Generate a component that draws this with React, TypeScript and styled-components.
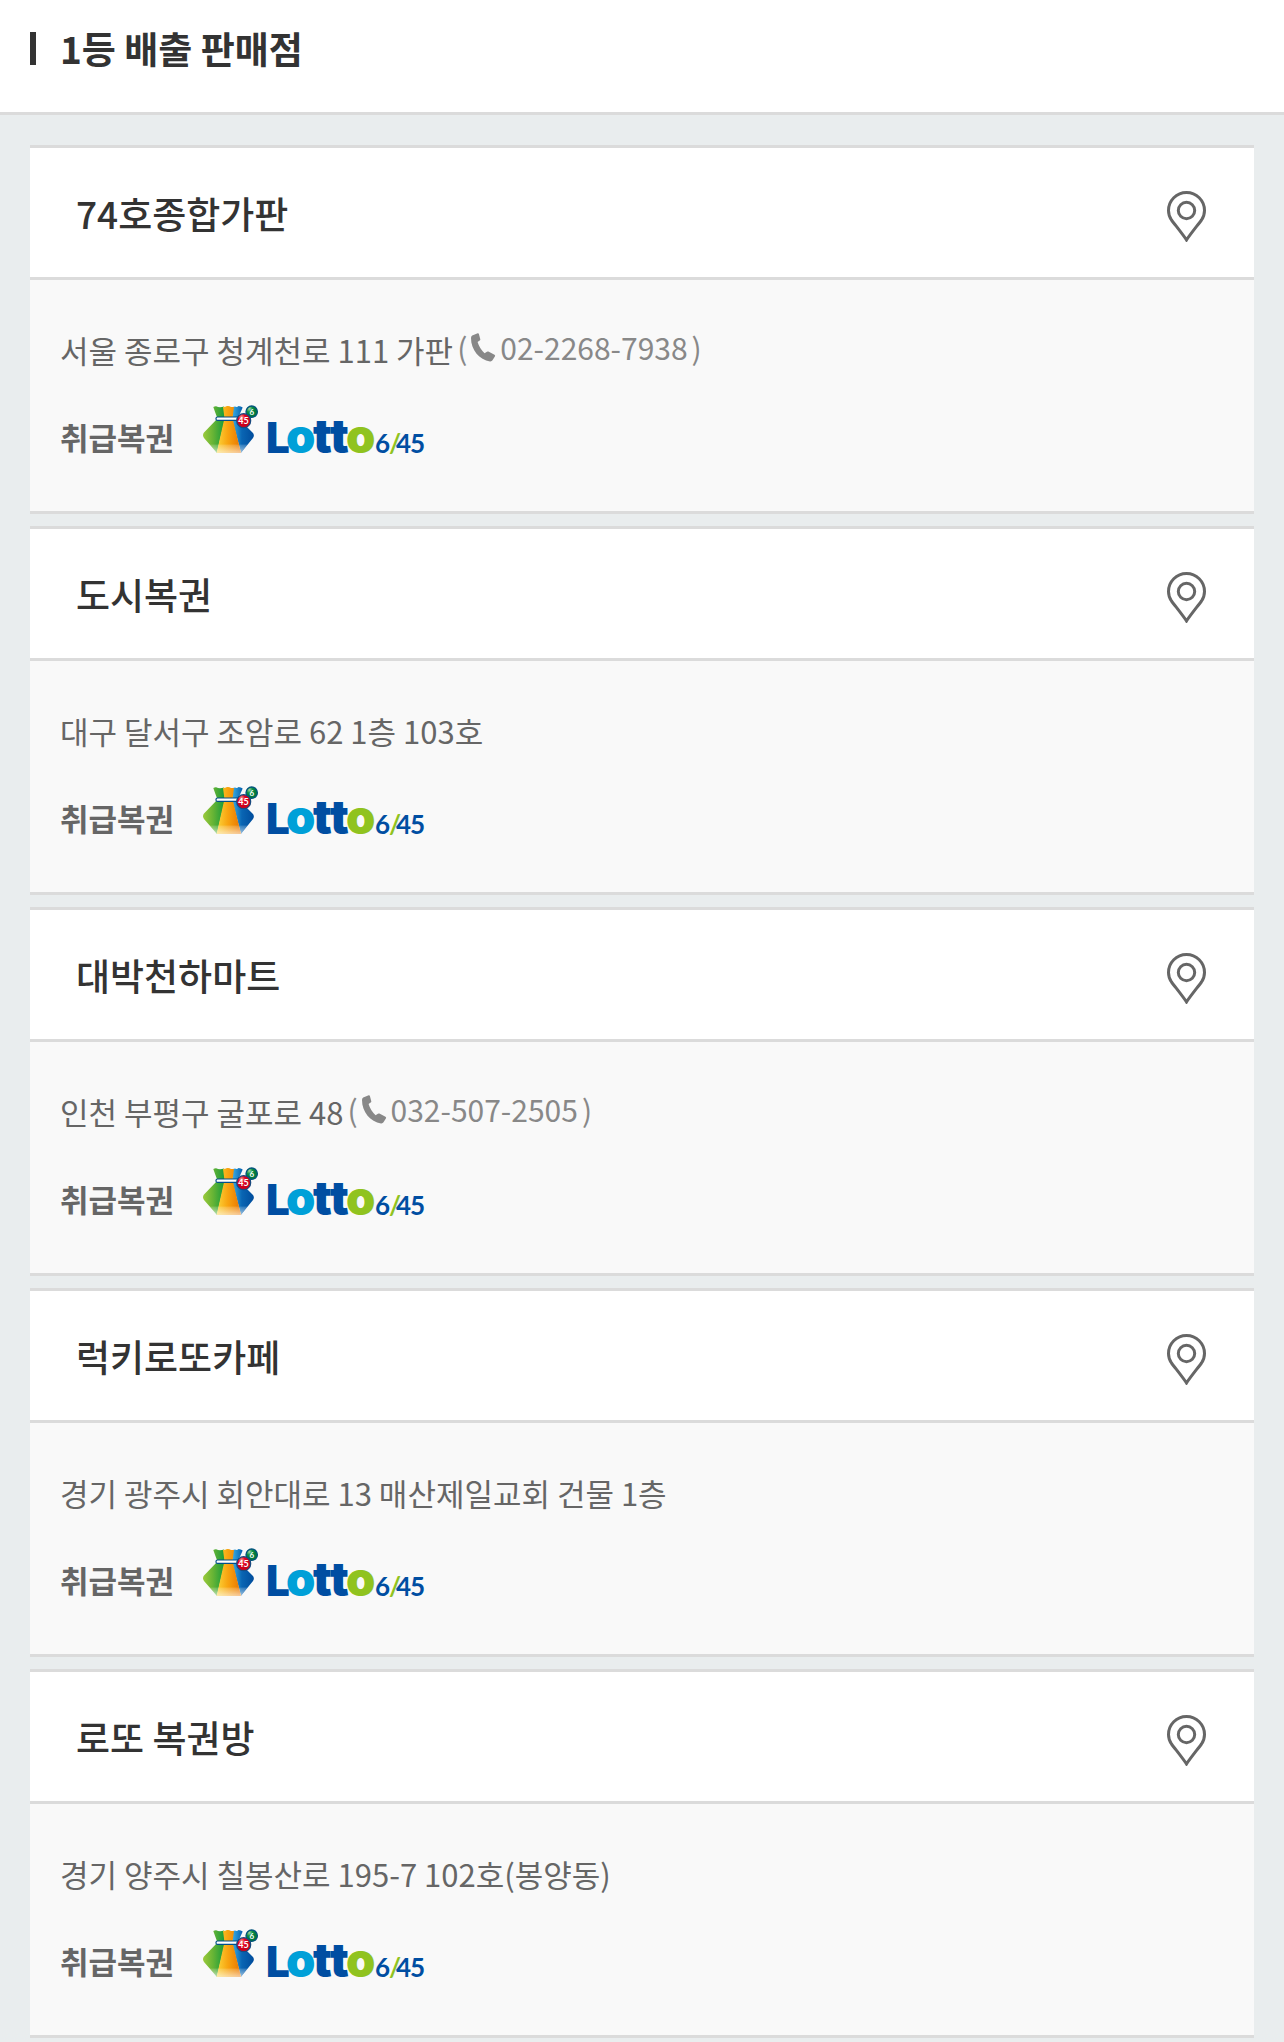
import React from 'react';
import styled, { createGlobalStyle } from 'styled-components';

const GlobalStyle = createGlobalStyle`
  *, *::before, *::after { box-sizing: border-box; }
  body {
    margin: 0;
    background: #e9edee;
    color: #333;
    font-family: "Noto Sans CJK KR", "Noto Sans", sans-serif;
  }
  h1, h2, p, ul, dl, dd { margin: 0; padding: 0; }
`;

const Header = styled.header`
  display: flex;
  align-items: center;
  gap: 24px;
  padding: 22px 30px 38px;
  background: #fff;
  border-bottom: 3px solid #dbdbdb;

  &::before {
    content: "";
    width: 6px;
    height: 33px;
    background: #333;
  }
`;

const PageTitle = styled.h1`
  font-size: 37px;
  line-height: 52px;
  font-weight: 700;
`;

const StoreList = styled.ul`
  display: flex;
  flex-direction: column;
  gap: 12px;
  padding: 30px 30px 0;
  list-style: none;
`;

const Card = styled.li`
  border-top: 3px solid #dbdbdb;
  border-bottom: 3px solid #dbdbdb;
  background: #f9f9f9;
`;

const CardHead = styled.div`
  display: flex;
  align-items: flex-end;
  justify-content: space-between;
  padding: 37px 48px 35px 46px;
  background: #fff;
  border-bottom: 3px solid #dbdbdb;
`;

const StoreName = styled.h2`
  font-size: 37px;
  line-height: 57px;
  font-weight: 500;
`;

const PinButton = styled.button`
  display: flex;
  padding: 0;
  border: 0;
  background: none;
  cursor: pointer;
`;

const CardBody = styled.div`
  display: flex;
  flex-direction: column;
  gap: 29px;
  padding: 45px 30px;
`;

const Address = styled.p`
  display: flex;
  align-items: flex-start;
  gap: 4px;
  font-size: 31px;
  line-height: 50px;
  color: #666;
`;

const Phone = styled.span`
  display: flex;
  align-items: center;
  gap: 4px;
  font-size: 30px;
  line-height: 44px;
  color: #888;
`;

const PhoneLink = styled.a`
  display: flex;
  align-items: center;
  gap: 4px;
  color: inherit;
  text-decoration: none;
`;

const Products = styled.dl`
  display: flex;
  align-items: flex-start;
  gap: 28px;
`;

const ProductsLabel = styled.dt`
  padding-top: 8px;
  font-size: 31px;
  line-height: 50px;
  font-weight: 700;
  color: #666;
`;

const ProductsItem = styled.dd`
  display: flex;
`;

function PinIcon() {
  return (
    <svg width="39" height="51" viewBox="0 0 39 51" fill="none" stroke="#666" strokeWidth="3" aria-hidden="true">
      <path d="M19.500 49C17 45 9 35 4.500 29C2.500 26.200 1.500 23 1.500 19.500A18 18 0 0 1 37.500 19.500C37.500 23 36.500 26.200 34.500 29C30 35 22 45 19.500 49Z" />
      <circle cx="19.500" cy="19.500" r="8.200" />
    </svg>
  );
}

function PhoneIcon() {
  return (
    <svg width="25" height="29" viewBox="0 0 25 29" fill="#888" aria-hidden="true">
      <path d="M1.200 2.600L6.700 .2Q7.600 0 7.900 .9L9.300 6.200Q9.500 7.100 8.700 7.500L6.600 9Q8.500 15.500 13.600 20.200L15.900 18.700Q16.600 18.200 17.400 18.600L23.500 21.700Q24.500 22.400 24 23.300L21.500 27.300Q20.700 28.600 19 28.400C8.500 27 0 17 0 5Q0 3.300 1.200 2.600Z" />
    </svg>
  );
}

function LottoLogo({ id }: { id: string }) {
  const green = `${id}-green`;
  const orange = `${id}-orange`;
  const blue = `${id}-blue`;
  const shine = `${id}-shine`;
  const red = `${id}-red`;
  const ball = `${id}-ball`;
  return (
    <svg width="230" height="62" viewBox="0 0 230 62" overflow="visible" role="img" aria-label="Lotto 6/45">
      <defs>
        <linearGradient id={green}>
          <stop offset="0" stopColor="#9cca3b" />
          <stop offset=".45" stopColor="#67b435" />
          <stop offset="1" stopColor="#149a3a" />
        </linearGradient>
        <linearGradient id={orange}>
          <stop offset="0" stopColor="#fbd43a" />
          <stop offset=".45" stopColor="#f8a511" />
          <stop offset="1" stopColor="#e87400" />
        </linearGradient>
        <linearGradient id={blue}>
          <stop offset="0" stopColor="#3bb0e5" />
          <stop offset=".45" stopColor="#0965b3" />
          <stop offset="1" stopColor="#004c9c" />
        </linearGradient>
        <linearGradient id={shine} x1="0" y1="0" x2="0" y2="1">
          <stop offset="0" stopColor="#fff" stopOpacity=".15" />
          <stop offset="1" stopColor="#fff" stopOpacity=".6" />
        </linearGradient>
        <radialGradient id={red} cx=".35" cy=".25">
          <stop offset="0" stopColor="#f3a296" />
          <stop offset=".5" stopColor="#e60020" />
          <stop offset="1" stopColor="#cc001c" />
        </radialGradient>
        <radialGradient id={ball} cx=".3" cy=".25">
          <stop offset="0" stopColor="#a8d5a2" />
          <stop offset=".55" stopColor="#0c9146" />
          <stop offset="1" stopColor="#007a3c" />
        </radialGradient>
      </defs>
      <path d="M11.300 3Q14 1.700 16 3Q19 3.500 22 2.500L23 15L14.900 48.700L2 34Q0 31 2 28.500L15.500 14.500Q13 8 11.300 3Z" fill={`url(#${green})`} />
      <path d="M31 3L33 2.500Q35 3.500 36.500 2Q39 2 40.700 3.500L36 14L50.500 28.500Q53 31 51 34L39 48.700L30 15Z" fill={`url(#${blue})`} />
      <path d="M21 3Q23.500 3 25 2Q27 1.500 29 3L32 3L30.500 14L39 48.700H14.700L22.500 14Z" fill={`url(#${orange})`} />
      <path d="M7.500 40.500H45.500L39 48.700H14.700Z" fill={`url(#${shine})`} />
      <rect x="14" y="13" width="23" height="3.400" rx="1.500" fill="#fff" stroke="#004f8a" strokeWidth="1.200" />
      <circle cx="49.700" cy="7.700" r="5.700" fill={`url(#${ball})`} stroke="#00547c" strokeWidth="1.300" />
      <circle cx="41.700" cy="16.700" r="7" fill={`url(#${red})`} stroke="#174a80" strokeWidth="1.200" />
      <g fill="#fff" fontFamily="Lato, sans-serif" fontWeight="700" textAnchor="middle">
        <text x="49.700" y="10.700" fontSize="8">6</text>
        <text x="41.500" y="20.200" fontSize="9">45</text>
      </g>
      <g fontFamily="Inter, sans-serif" fontWeight="900">
        <text x="64" y="48.500" fontSize="42" fill="#004ea2">L</text>
        <text x="84" y="48.500" fontSize="47" fill="#00a0d8">o</text>
        <text x="111 128" y="48.500" fontSize="47" fill="#004ea2">tt</text>
        <text x="144" y="48.500" fontSize="47" fill="#90c31f">o</text>
      </g>
      <g fontFamily="Lato, sans-serif" fontWeight="700" fontSize="26" fill="#004ea2">
        <text x="173" y="48.500">6</text>
        <text x="187" y="48.500" fill="#90c31f">/</text>
        <text x="194 208" y="48.500">45</text>
      </g>
    </svg>
  );
}

interface Store {
  name: string;
  address: string;
  phone?: string;
}

const stores: Store[] = [
  { name: '74호종합가판', address: '서울 종로구 청계천로 111 가판', phone: '02-2268-7938' },
  { name: '도시복권', address: '대구 달서구 조암로 62 1층 103호' },
  { name: '대박천하마트', address: '인천 부평구 굴포로 48', phone: '032-507-2505' },
  { name: '럭키로또카페', address: '경기 광주시 회안대로 13 매산제일교회 건물 1층' },
  { name: '로또 복권방', address: '경기 양주시 칠봉산로 195-7 102호(봉양동)' },
];

function StoreCard({ store, id }: { store: Store; id: string }) {
  return (
    <Card>
      <CardHead>
        <StoreName>{store.name}</StoreName>
        <PinButton type="button" aria-label={`${store.name} 위치 보기`}>
          <PinIcon />
        </PinButton>
      </CardHead>
      <CardBody>
        <Address>
          <span>{store.address}</span>
          {store.phone && (
            <Phone>
              <span>(</span>
              <PhoneLink href={`tel:${store.phone}`}>
                <PhoneIcon />
                {store.phone}
              </PhoneLink>
              <span>)</span>
            </Phone>
          )}
        </Address>
        <Products>
          <ProductsLabel>취급복권</ProductsLabel>
          <ProductsItem>
            <LottoLogo id={id} />
          </ProductsItem>
        </Products>
      </CardBody>
    </Card>
  );
}

export default function App() {
  return (
    <>
      <GlobalStyle />
      <Header>
        <PageTitle>1등 배출 판매점</PageTitle>
      </Header>
      <main>
        <StoreList>
          {stores.map((store, index) => (
            <StoreCard key={store.name} store={store} id={`store-${index}`} />
          ))}
        </StoreList>
      </main>
    </>
  );
}
